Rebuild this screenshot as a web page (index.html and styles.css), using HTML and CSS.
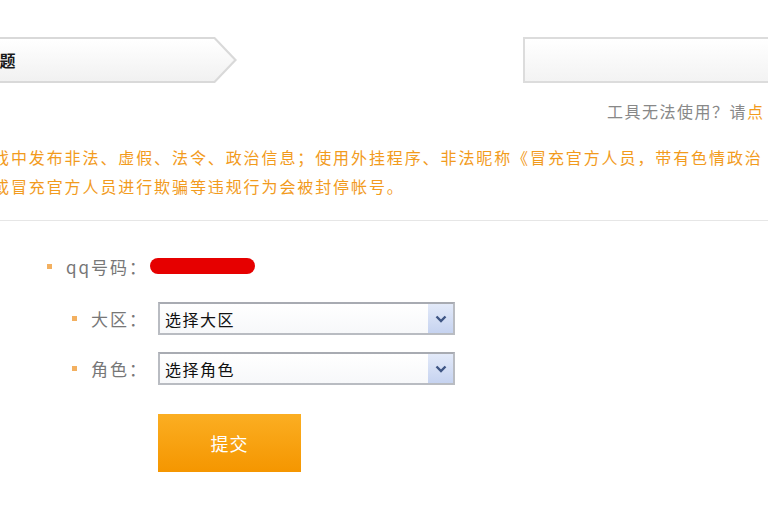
FILE: index.html
```html
<!DOCTYPE html>
<html>
<head>
<meta charset="utf-8">
<meta name="viewport" content="width=device-width, initial-scale=1.0"/>
<link rel="stylesheet" href="styles.css">
</head>
<body>

<!-- Step bar and tool box -->
<div class="topbar">
  <div class="step">
    <div class="step-inner"><span class="step-text">问题</span></div>
  </div>
  <div class="side">
    <div class="toolbox"></div>
    <p class="help">工具无法使用？请<a href="#">点</a></p>
  </div>
</div>

<!-- Rules notice -->
<div class="notice">
  <p>戏中发布非法、虚假、法令、政治信息；使用外挂程序、非法昵称《冒充官方人员，带有色情政治</p>
  <p>或冒充官方人员进行欺骗等违规行为会被封停帐号。</p>
</div>

<!-- Form -->
<form class="form" onsubmit="return false;">
  <div class="row row-qq">
    <label class="label"><i class="dot"></i>qq号码：</label>
    <span class="qq-mask"></span>
  </div>
  <div class="row">
    <label class="label"><i class="dot"></i>大区：</label>
    <div class="select">
      <span>选择大区</span>
      <span class="select-btn">
        <svg width="12" height="8" viewBox="0 0 12 8"><path d="M1.5 1.5 L6 6 L10.5 1.5" fill="none" stroke="#3f5684" stroke-width="2.4"/></svg>
      </span>
    </div>
  </div>
  <div class="row">
    <label class="label"><i class="dot"></i>角色：</label>
    <div class="select">
      <span>选择角色</span>
      <span class="select-btn">
        <svg width="12" height="8" viewBox="0 0 12 8"><path d="M1.5 1.5 L6 6 L10.5 1.5" fill="none" stroke="#3f5684" stroke-width="2.4"/></svg>
      </span>
    </div>
  </div>
  <button class="submit" type="submit">提交</button>
</form>

</body>
</html>
```

FILE: styles.css
```css
body {
    margin: 0;
    overflow: hidden;
    background: #fff;
    font-family: "Noto Sans CJK SC", "Liberation Sans", sans-serif;
    font-size: 16px;
    letter-spacing: 1.5px;
}

p {
    margin: 0;
}

/* top bar */
.topbar {
    display: flex;
    margin-top: 37px;
}

.step {
    width: 237px;
    height: 46px;
    padding: 2px 0;
    box-sizing: border-box;
    background: #d9d9d9;
    clip-path: polygon(0 0, 215px 0, 237px 23px, 215px 46px, 0 46px);
}

.step-inner {
    height: 42px;
    background: linear-gradient(#ffffff, #f1f1f1);
    clip-path: polygon(0 0, 214px 0, 234px 21px, 214px 42px, 0 42px);
    display: flex;
    align-items: center;
}

.step-text {
    margin-left: -18px;
    color: #1a1a1a;
    font-weight: bold;
    white-space: nowrap;
}

.side {
    margin-left: auto;
    width: 245px;
}

.toolbox {
    width: 260px;
    height: 46px;
    box-sizing: border-box;
    border: 2px solid #dcdcdc;
    border-right: none;
    background: linear-gradient(#ffffff, #f3f3f3);
}

.help {
    margin-top: 18px;
    padding-left: 84px;
    line-height: 20px;
    color: #888;
    white-space: nowrap;
}

.help a {
    color: #f29b1d;
    text-decoration: none;
}

/* notice */
.notice {
    margin-top: 22px;
    margin-left: -7px;
    padding-bottom: 19px;
    border-bottom: 1px solid #e6e6e6;
    color: #f29b1d;
    line-height: 29px;
    letter-spacing: 1.9px;
    white-space: nowrap;
}

/* form */
.form {
    padding-top: 26px;
    display: flex;
    flex-direction: column;
    gap: 17px;
}

.row {
    display: flex;
    align-items: center;
    height: 33px;
}

.row-qq {
    height: 38px;
}

.label {
    width: 148px;
    display: flex;
    align-items: center;
    justify-content: flex-end;
    color: #777;
    font-size: 17px;
    letter-spacing: 2px;
    white-space: nowrap;
}

.dot {
    width: 5px;
    height: 5px;
    background: #f3b060;
    margin-right: 14px;
}

.qq-mask {
    margin-left: 2px;
    width: 105px;
    height: 16px;
    border-radius: 8px;
    background: #e60000;
}

.select {
    margin-left: 10px;
    width: 297px;
    height: 33px;
    box-sizing: border-box;
    border: 2px solid #b9bcc2;
    border-top-color: #a8abb2;
    background: linear-gradient(#ffffff, #f7f8fa);
    display: flex;
    align-items: center;
    padding-left: 5px;
    color: #111;
}

.select-btn {
    margin-left: auto;
    width: 25px;
    height: 29px;
    background: linear-gradient(#e3eaf9, #c6d3f0);
    display: flex;
    align-items: center;
    justify-content: center;
}

.submit {
    margin-top: 12px;
    margin-left: 158px;
    width: 143px;
    height: 58px;
    border: none;
    background: linear-gradient(#fbae22, #f59600);
    color: #fff;
    font-family: inherit;
    font-size: 18px;
    letter-spacing: 1px;
    cursor: pointer;
}
```
